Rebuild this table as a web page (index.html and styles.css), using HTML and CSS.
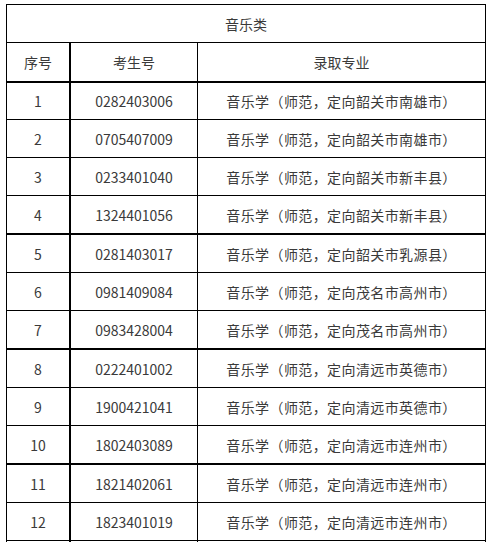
FILE: index.html
```html
<!DOCTYPE html>
<html lang="zh-CN">
<head>
<meta charset="utf-8">
<title>音乐类</title>
<link rel="stylesheet" href="styles.css">
</head>
<body>
<div class="wrap">
<table class="grid">
  <colgroup>
    <col class="c1"><col class="c2"><col class="c3">
  </colgroup>
  <tr class="title"><td colspan="3">音乐类</td></tr>
  <tr class="head thick"><td class="sep">序号</td><td>考生号</td><td>录取专业</td></tr>
  <tr class="first"><td class="sep">1</td><td>0282403006</td><td class="major">音乐学（师范，定向韶关市南雄市）</td></tr>
  <tr><td class="sep">2</td><td>0705407009</td><td class="major">音乐学（师范，定向韶关市南雄市）</td></tr>
  <tr><td class="sep">3</td><td>0233401040</td><td class="major">音乐学（师范，定向韶关市新丰县）</td></tr>
  <tr class="thick"><td class="sep">4</td><td>1324401056</td><td class="major">音乐学（师范，定向韶关市新丰县）</td></tr>
  <tr><td class="sep">5</td><td>0281403017</td><td class="major">音乐学（师范，定向韶关市乳源县）</td></tr>
  <tr><td class="sep">6</td><td>0981409084</td><td class="major">音乐学（师范，定向茂名市高州市）</td></tr>
  <tr class="thick"><td class="sep">7</td><td>0983428004</td><td class="major">音乐学（师范，定向茂名市高州市）</td></tr>
  <tr><td class="sep">8</td><td>0222401002</td><td class="major">音乐学（师范，定向清远市英德市）</td></tr>
  <tr><td class="sep">9</td><td>1900421041</td><td class="major">音乐学（师范，定向清远市英德市）</td></tr>
  <tr class="thick"><td class="sep">10</td><td>1802403089</td><td class="major">音乐学（师范，定向清远市连州市）</td></tr>
  <tr><td class="sep">11</td><td>1821402061</td><td class="major">音乐学（师范，定向清远市连州市）</td></tr>
  <tr><td class="sep">12</td><td>1823401019</td><td class="major">音乐学（师范，定向清远市连州市）</td></tr>
  <tr class="cut"><td class="sep"></td><td></td><td></td></tr>
</table>
</div>
</body>
</html>
```
FILE: styles.css
```css
html, body {
  margin: 0;
  padding: 0;
  background: #ffffff;
}
.wrap {
  padding: 4px 0 0 6px;
}
.grid {
  border-collapse: separate;
  border-spacing: 0;
  border-top: 1px solid #000;
  border-left: 1px solid #000;
  table-layout: fixed;
  width: 480px;
  font-family: "Noto Sans CJK SC", "Microsoft YaHei", sans-serif;
  font-size: 14px;
  color: #3a3a3a;
}
.c1 { width: 64px; }
.c2 { width: 127px; }
.c3 { width: 288px; }
.grid td {
  border-right: 1px solid #000;
  border-bottom: 1px solid #000;
  text-align: center;
  vertical-align: middle;
  padding: 0;
  height: 37px;
  line-height: 20px;
  white-space: nowrap;
}
.grid td.major {
  letter-spacing: 0.4px;
}
.grid td.sep {
  border-right-width: 2px;
}
.grid tr.title td {
  height: 37px;
}
.grid tr.head td {
  height: 38px;
}
.grid tr.first td {
  height: 36px;
}
.grid tr.thick td {
  border-bottom-width: 2px;
}
.grid tr.cut td {
  height: 20px;
  border-bottom: none;
}
```
